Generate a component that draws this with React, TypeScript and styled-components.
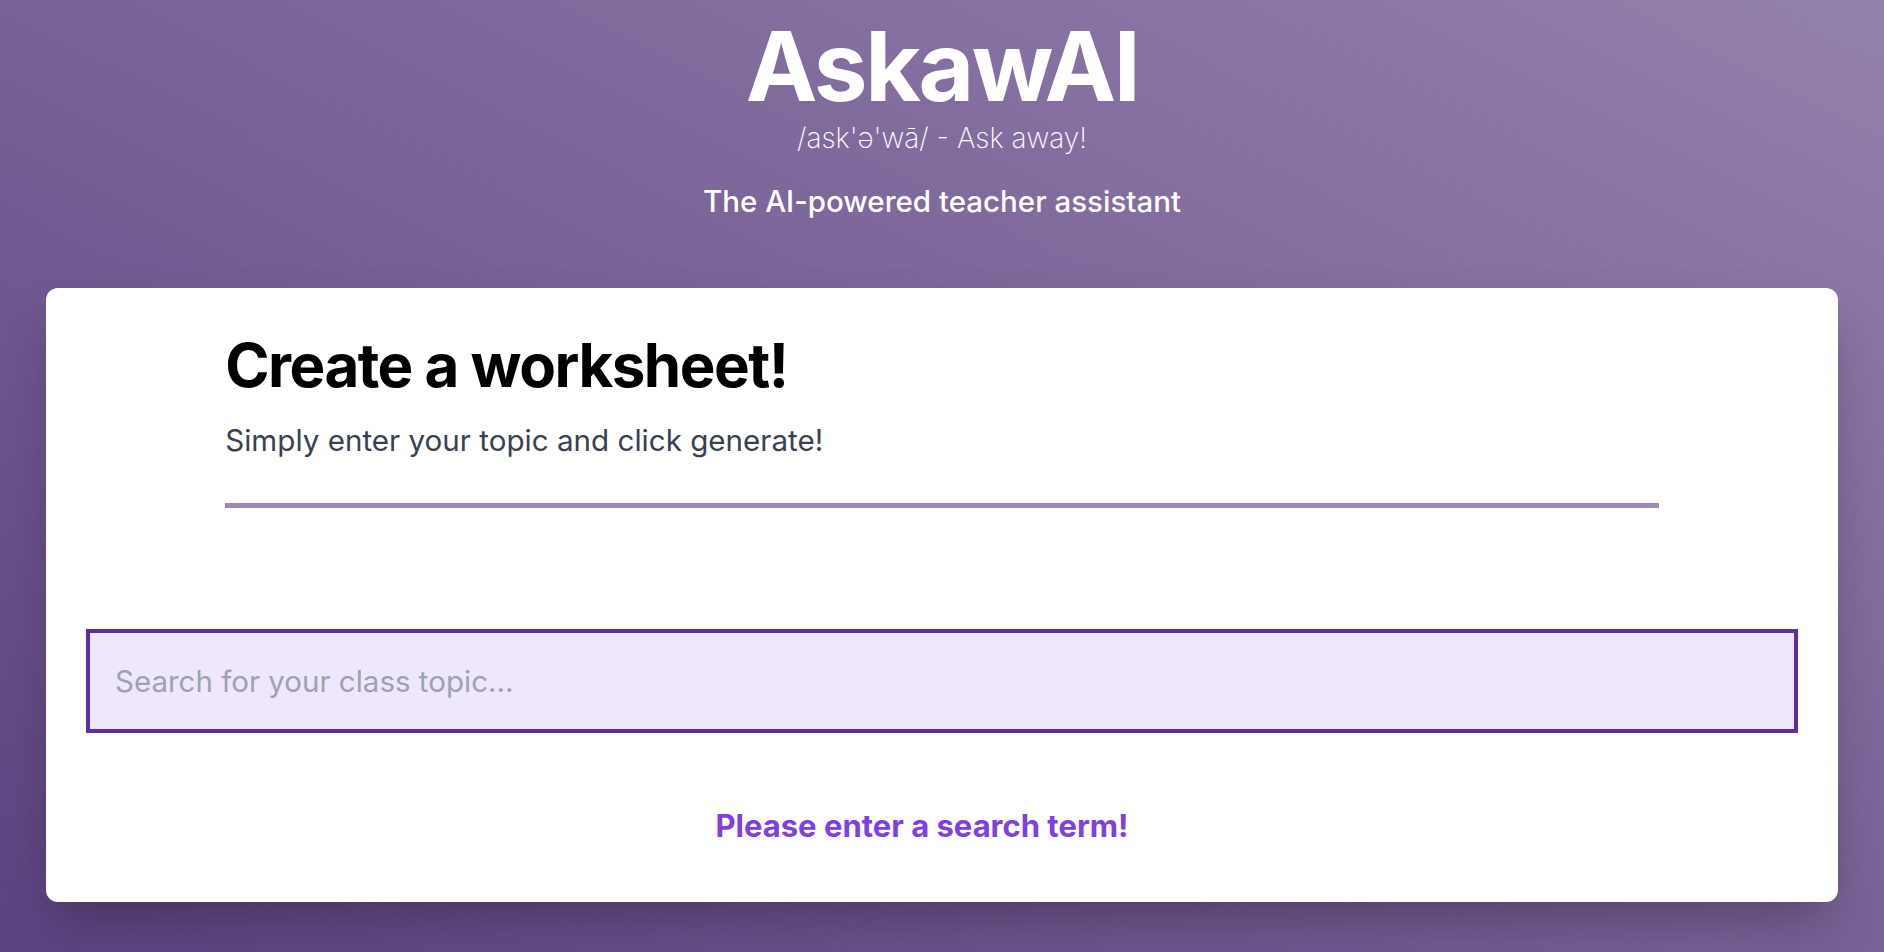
import React, { useState } from 'react'
import styled, { createGlobalStyle } from 'styled-components'

const GlobalStyle = createGlobalStyle`
  html, body {
    margin: 0;
    padding: 0;
  }
  body {
    font-family: Inter, "Noto Sans", "Liberation Sans", sans-serif;
    background: linear-gradient(to top right, #5b4381 0%, #786196 50%, #9381ad 100%);
    min-height: 100vh;
  }
  * {
    box-sizing: border-box;
  }
`

const Page = styled.div`
  min-height: 100vh;
  display: flex;
  flex-direction: column;
  padding: 18px 46px 50px;
`

const Header = styled.header`
  display: flex;
  flex-direction: column;
  align-items: center;
  color: #fff;
  margin-bottom: 65px;
`

const Logo = styled.h1`
  margin: 0;
  font-size: 96px;
  line-height: 1;
  font-weight: 700;
  letter-spacing: -0.025em;
`

const Pronunciation = styled.p`
  margin: 8px 0 0;
  font-size: 28px;
  line-height: 1.2;
  font-weight: 200;
`

const Tagline = styled.p`
  margin: 23px 0 0;
  font-size: 29.5px;
  line-height: 1.5;
  font-weight: 500;
`

const Card = styled.main`
  background: #fff;
  border-radius: 12px;
  box-shadow: 0 25px 50px -12px rgba(0, 0, 0, 0.3);
  padding: 47px 0 52px;
  display: flex;
  flex-direction: column;
`

const Intro = styled.section`
  width: 80%;
  margin: 0 auto;
`

const Heading = styled.h2`
  margin: 0;
  font-size: 60px;
  line-height: 1;
  font-weight: 700;
  letter-spacing: -0.025em;
  color: #000;
`

const Lead = styled.p`
  margin: 23px 0 0;
  font-size: 29.6px;
  line-height: 1.5;
  color: #374151;
`

const Divider = styled.hr`
  margin: 41px 0 0;
  border: none;
  height: 5px;
  background: #9d89b1;
`

const SearchInput = styled.input`
  margin: 121px 40px 0;
  width: auto;
  height: 104px;
  padding: 0 25px;
  border: 4px solid #5e2ea0;
  border-radius: 0;
  background: #efe8fd;
  font-family: inherit;
  font-size: 29.5px;
  color: #111827;
  outline: none;

  &::placeholder {
    color: #9ca3af;
  }
`

const Message = styled.p`
  margin: 70px 40px 0 0;
  text-align: center;
  font-size: 31px;
  line-height: 1.5;
  font-weight: 700;
  color: #7e3fe4;
`

export default function App() {
  const [term, setTerm] = useState('')

  return (
    <>
      <GlobalStyle />
      <Page>
        <Header>
          <Logo>AskawAI</Logo>
          <Pronunciation>/ask'ə'wā/ - Ask away!</Pronunciation>
          <Tagline>The AI-powered teacher assistant</Tagline>
        </Header>
        <Card>
          <Intro>
            <Heading>Create a worksheet!</Heading>
            <Lead>Simply enter your topic and click generate!</Lead>
            <Divider />
          </Intro>
          <SearchInput
            value={term}
            onChange={e => setTerm(e.target.value)}
            placeholder="Search for your class topic..."
          />
          {!term && <Message>Please enter a search term!</Message>}
        </Card>
      </Page>
    </>
  )
}
